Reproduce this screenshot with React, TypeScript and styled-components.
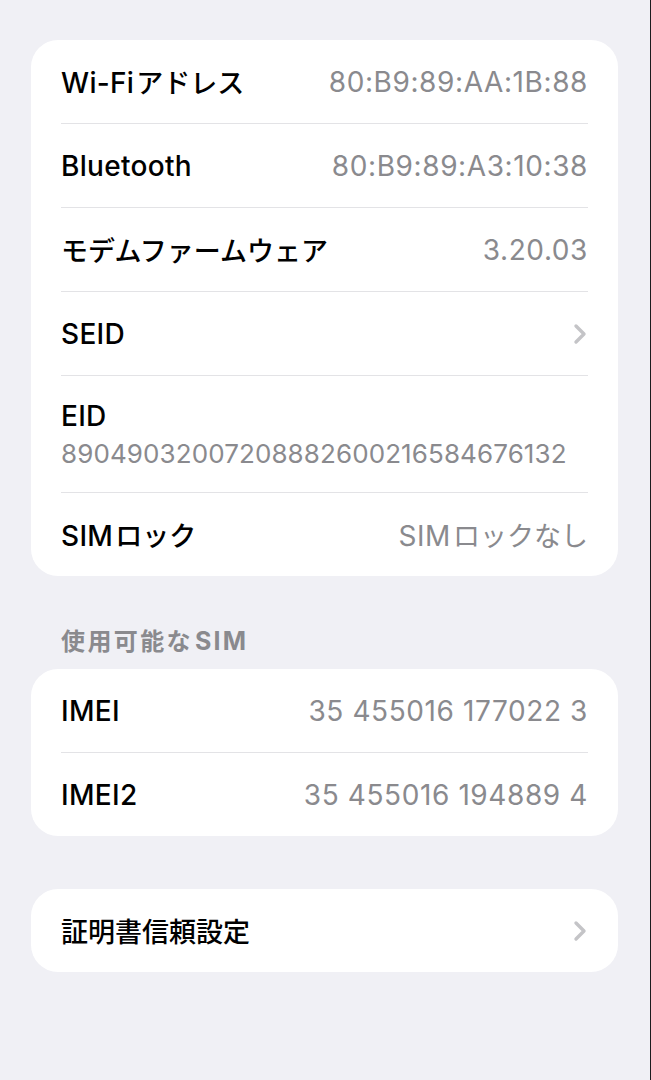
import React from "react";
import styled, { createGlobalStyle } from "styled-components";

const GlobalStyle = createGlobalStyle`
  html, body {
    margin: 0;
    padding: 0;
    background: #f0f0f5;
  }
  body {
    font-family: Inter, "Noto Sans CJK JP", sans-serif;
    -webkit-font-smoothing: antialiased;
  }
`;

const Page = styled.div`
  min-height: 1080px;
  box-sizing: border-box;
  padding: 40px 32px 0 31px;
  background: #f0f0f5;
  border-right: 1px solid #1c1c1e;
`;

const Card = styled.div<{ $mt?: number }>`
  background: #ffffff;
  border-radius: 27px;
  padding: 0 30px;
  margin-top: ${({ $mt }) => $mt ?? 0}px;
`;

const Row = styled.div<{ $tall?: boolean }>`
  display: flex;
  flex-direction: ${({ $tall }) => ($tall ? "column" : "row")};
  align-items: ${({ $tall }) => ($tall ? "flex-start" : "center")};
  justify-content: ${({ $tall }) => ($tall ? "center" : "space-between")};
  height: ${({ $tall }) => ($tall ? 116 : 83)}px;
  border-bottom: 1px solid #e3e3e6;

  &:last-child {
    border-bottom: none;
  }
`;

const Label = styled.span`
  font-size: 28px;
  font-weight: 500;
  color: #000000;
  letter-spacing: 0.3px;
`;

const Value = styled.span`
  font-size: 28px;
  font-weight: 400;
  color: #8a8a8e;
  letter-spacing: 0.6px;
`;

// Japanese runs sit a touch smaller and tighter than the Latin text
const Jp = styled.span`
  font-size: 27px;
  letter-spacing: 0;
  margin-left: 2px;
`;

const SubValue = styled.span`
  font-size: 26px;
  font-weight: 400;
  color: #8a8a8e;
  margin-top: 5px;
  letter-spacing: 0.1px;
`;

const SectionHeader = styled.div`
  font-size: 24px;
  line-height: 28px;
  font-weight: 700;
  color: #8a8a8e;
  letter-spacing: 2.4px;
  padding: 51px 0 13px 30px;
`;

const HeaderLatin = styled.span`
  font-size: 25px;
  font-weight: 700;
  letter-spacing: 2.2px;
  margin-left: 2px;
`;

const Chevron = () => (
  <svg width="14" height="22" viewBox="0 0 14 22" style={{ marginRight: 1 }}>
    <path
      d="M3 3 L11 11 L3 19"
      fill="none"
      stroke="#c4c4c7"
      strokeWidth="3.4"
      strokeLinecap="round"
      strokeLinejoin="round"
    />
  </svg>
);

const info: [React.ReactNode, string | null][] = [
  [<>Wi-Fi<Jp>アドレス</Jp></>, "80:B9:89:AA:1B:88"],
  ["Bluetooth", "80:B9:89:A3:10:38"],
  [<Jp style={{ marginLeft: 0 }}>モデムファームウェア</Jp>, "3.20.03"],
  ["SEID", null],
];

export default function App() {
  return (
    <>
      <GlobalStyle />
      <Page>
        <Card>
          {info.map(([label, value], i) => (
            <Row key={i}>
              <Label>{label}</Label>
              {value ? <Value>{value}</Value> : <Chevron />}
            </Row>
          ))}
          <Row $tall>
            <Label>EID</Label>
            <SubValue>89049032007208882600216584676132</SubValue>
          </Row>
          <Row>
            <Label>
              SIM<Jp>ロック</Jp>
            </Label>
            <Value>
              SIM<Jp>ロックなし</Jp>
            </Value>
          </Row>
        </Card>

        <SectionHeader>
          使用可能な<HeaderLatin>SIM</HeaderLatin>
        </SectionHeader>
        <Card>
          <Row>
            <Label>IMEI</Label>
            <Value>35 455016 177022 3</Value>
          </Row>
          <Row>
            <Label>IMEI2</Label>
            <Value>35 455016 194889 4</Value>
          </Row>
        </Card>

        <Card $mt={53}>
          <Row>
            <Label>
              <Jp style={{ marginLeft: 0 }}>証明書信頼設定</Jp>
            </Label>
            <Chevron />
          </Row>
        </Card>
      </Page>
    </>
  );
}
